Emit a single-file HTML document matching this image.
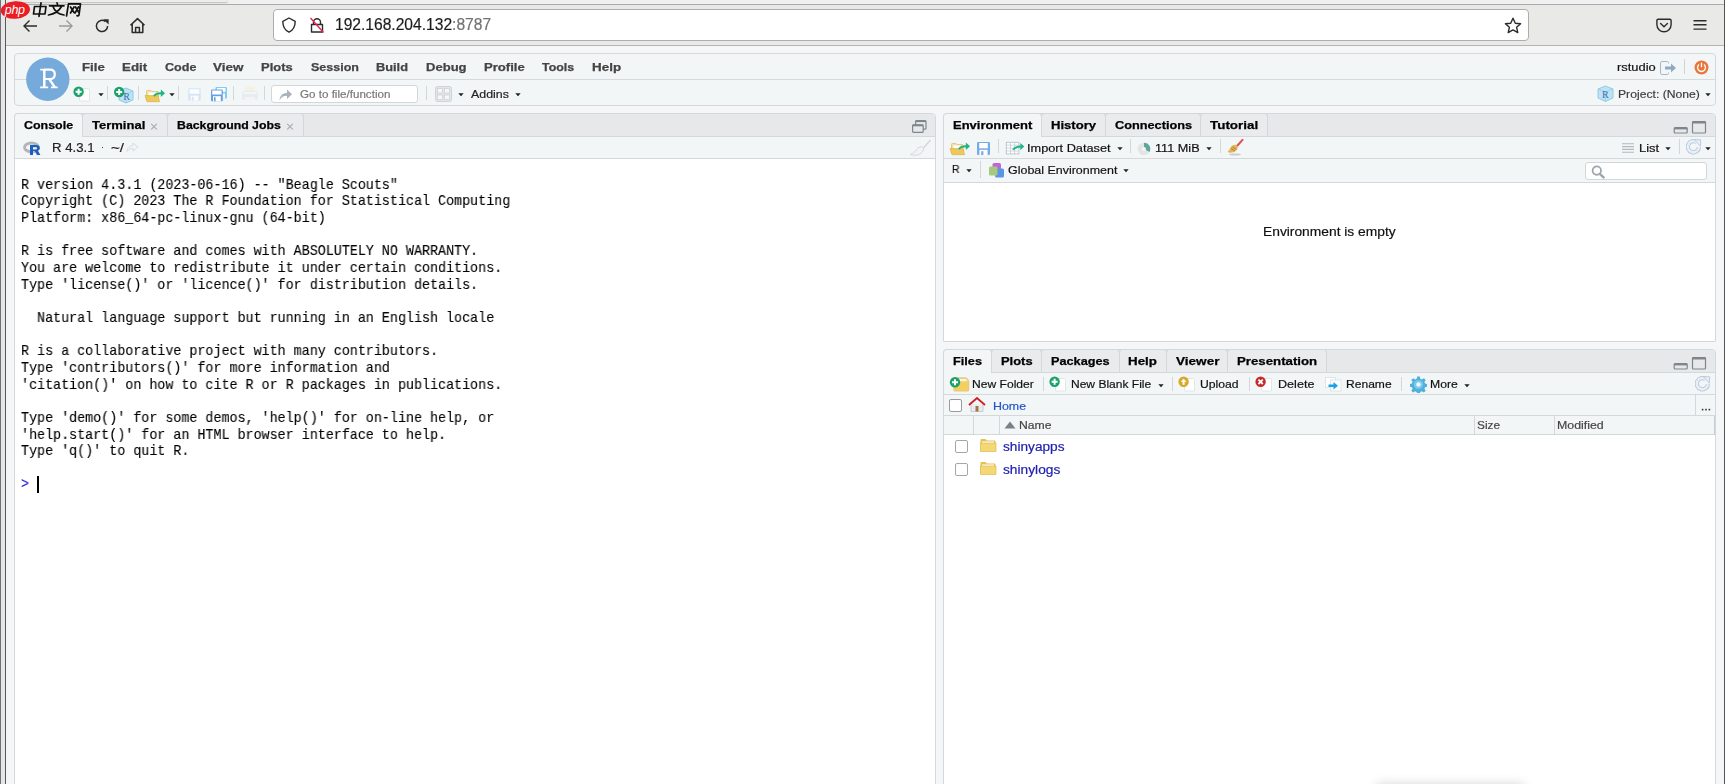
<!DOCTYPE html>
<html><head><meta charset="utf-8"><title>RStudio</title><style>*{box-sizing:border-box;margin:0;padding:0}
html,body{width:1725px;height:784px;overflow:hidden;background:#f5f6f8;font-family:"Liberation Sans",sans-serif}
.a{position:absolute;display:block}
.t{position:absolute;white-space:pre;line-height:1;transform-origin:0 0;will-change:transform}
</style></head><body>
<div class="a" style="left:0px;top:0px;width:1725px;height:784px;background:#f5f6f8;"></div>
<div class="a" style="left:0px;top:0px;width:1725px;height:5px;background:#f0f0f0;"></div>
<div class="a" style="left:6px;top:0px;width:222px;height:2px;background:#ececeb;box-shadow:0 1px 1.5px rgba(0,0,0,0.22);border-bottom-right-radius:3px;"></div>
<div class="a" style="left:0px;top:4px;width:1725px;height:1px;background:#ababab;"></div>
<div class="a" style="left:0px;top:5px;width:1725px;height:40px;background:#e9e9e7;"></div>
<div class="a" style="left:0px;top:45px;width:1725px;height:1px;background:#b4b4b2;"></div>
<div class="a" style="left:273px;top:9px;width:1256px;height:32px;background:#ffffff;border:1px solid #adadad;border-radius:4px;"></div>
<svg class="a" style="left:22px;top:19px;" width="16" height="14" viewBox="0 0 16 14"><path d="M15 7H2M7.5 1.5L2 7l5.5 5.5" fill="none" stroke="#2b2b2b" stroke-width="1.4"/></svg>
<svg class="a" style="left:58px;top:19px;" width="16" height="14" viewBox="0 0 16 14"><path d="M1 7h13M8.5 1.5L14 7l-5.5 5.5" fill="none" stroke="#9a9a9a" stroke-width="1.4"/></svg>
<svg class="a" style="left:94px;top:18px;" width="16" height="16" viewBox="0 0 16 16"><path d="M13.6 8A5.6 5.6 0 1 1 11.5 3.6" fill="none" stroke="#2b2b2b" stroke-width="1.5"/><path d="M9.3 1.2h5.3v5.3z" fill="#2b2b2b"/></svg>
<svg class="a" style="left:129px;top:17px;" width="17" height="17" viewBox="0 0 17 17"><path d="M1.5 8.3L8.5 1.6l7 6.7M3.2 7v8.6h10.6V7M6.6 15.6v-5h3.8v5" fill="none" stroke="#2b2b2b" stroke-width="1.5" stroke-linejoin="round"/></svg>
<svg class="a" style="left:281px;top:17px;" width="16" height="16" viewBox="0 0 16 16"><path d="M8 1L14.2 4.3c0 5-1.6 8.8-6.2 10.9C3.4 13.1 1.8 9.3 1.8 4.3z" fill="none" stroke="#2b2b2b" stroke-width="1.4" stroke-linejoin="round"/></svg>
<svg class="a" style="left:309px;top:17px;" width="16" height="16" viewBox="0 0 16 16"><path d="M4.5 7.5V5.2A3.5 3.5 0 0 1 11.5 5.2V7.5M2.5 7.5h11v7.5h-11z" fill="none" stroke="#2b2b2b" stroke-width="1.4" stroke-linejoin="round"/><path d="M1.5 1L14.5 15.5" stroke="#e22850" stroke-width="1.4"/></svg>
<div class="t" id="t0" style="left:335.40px;top:17px;font-size:15.6px;color:#1c1c1c;font-family:'Liberation Sans',sans-serif;-webkit-text-stroke:0.18px currentColor;transform:scaleX(0.9999);">192.168.204.132<span style="color:#727272">:8787</span></div>
<svg class="a" style="left:1504px;top:17px;" width="18" height="17" viewBox="0 0 18 17"><path d="M9 1.2l2.3 5 5.3.5-4 3.6 1.2 5.3L9 12.9l-4.8 2.7 1.2-5.3-4-3.6 5.3-.5z" fill="none" stroke="#2b2b2b" stroke-width="1.4" stroke-linejoin="round"/></svg>
<svg class="a" style="left:1656px;top:18px;" width="16" height="15" viewBox="0 0 16 15"><path d="M2.2 1.2h11.6c.8 0 1.3.5 1.3 1.3v4.3A7.1 7.1 0 0 1 8 13.8 7.1 7.1 0 0 1 .9 6.8V2.5c0-.8.5-1.3 1.3-1.3z" fill="none" stroke="#2b2b2b" stroke-width="1.4"/><path d="M4.6 5.6L8 8.8l3.4-3.2" fill="none" stroke="#2b2b2b" stroke-width="1.4" stroke-linecap="round"/></svg>
<svg class="a" style="left:1693px;top:19px;" width="14" height="12" viewBox="0 0 14 12"><path d="M0.5 1.7h13M0.5 5.8h13M0.5 10.1h13" stroke="#2b2b2b" stroke-width="1.4"/></svg>
<div class="a" style="left:0px;top:0px;width:1px;height:784px;background:#6d727a;"></div>
<div class="a" style="left:1px;top:0px;width:4px;height:784px;background:#e6e6e6;"></div>
<div class="a" style="left:5px;top:0px;width:1px;height:784px;background:#585858;"></div>
<div class="a" style="left:1724px;top:0px;width:1px;height:784px;background:#555555;"></div>
<div class="a" style="left:14px;top:53px;width:1702px;height:53px;background:#f3f6f7;border:1px solid #d3d8db;border-radius:4px;"></div>
<div class="a" style="left:15px;top:79px;width:1700px;height:1px;background:#d6dadd;"></div>
<svg class="a" style="left:26px;top:57px;" width="44" height="44" viewBox="0 0 44 44"><circle cx="21.8" cy="22.2" r="21.7" fill="#75aadb"/><g fill="none" stroke="#fff" stroke-linecap="butt"><path d="M18.3 12.2V30.8" stroke-width="2.5"/><path d="M14.2 12.6H19M14.2 30.4H22.2M25 30.4H31.7" stroke-width="1.8"/><path d="M18.3 12.6H24c3.2 0 4.8 2.1 4.8 4.7 0 2.6-1.6 4.7-4.8 4.7H18.3" stroke-width="2.2"/><path d="M23.2 22L29 30.4" stroke-width="2.3"/></g></svg>
<div class="t" id="t1" style="left:81.90px;top:62px;font-size:11.3px;color:#444444;font-family:'Liberation Sans',sans-serif;font-weight:bold;-webkit-text-stroke:0.25px currentColor;transform:scaleX(1.1711);">File</div>
<div class="t" id="t2" style="left:122.10px;top:62px;font-size:11.3px;color:#444444;font-family:'Liberation Sans',sans-serif;font-weight:bold;-webkit-text-stroke:0.25px currentColor;transform:scaleX(1.1807);">Edit</div>
<div class="t" id="t3" style="left:164.70px;top:62px;font-size:11.3px;color:#444444;font-family:'Liberation Sans',sans-serif;font-weight:bold;-webkit-text-stroke:0.25px currentColor;transform:scaleX(1.1115);">Code</div>
<div class="t" id="t4" style="left:213.40px;top:62px;font-size:11.3px;color:#444444;font-family:'Liberation Sans',sans-serif;font-weight:bold;-webkit-text-stroke:0.25px currentColor;transform:scaleX(1.1900);">View</div>
<div class="t" id="t5" style="left:261.10px;top:62px;font-size:11.3px;color:#444444;font-family:'Liberation Sans',sans-serif;font-weight:bold;-webkit-text-stroke:0.25px currentColor;transform:scaleX(1.1475);">Plots</div>
<div class="t" id="t6" style="left:310.50px;top:62px;font-size:11.3px;color:#444444;font-family:'Liberation Sans',sans-serif;font-weight:bold;-webkit-text-stroke:0.25px currentColor;transform:scaleX(1.1055);">Session</div>
<div class="t" id="t7" style="left:376.30px;top:62px;font-size:11.3px;color:#444444;font-family:'Liberation Sans',sans-serif;font-weight:bold;-webkit-text-stroke:0.25px currentColor;transform:scaleX(1.1327);">Build</div>
<div class="t" id="t8" style="left:425.70px;top:62px;font-size:11.3px;color:#444444;font-family:'Liberation Sans',sans-serif;font-weight:bold;-webkit-text-stroke:0.25px currentColor;transform:scaleX(1.1548);">Debug</div>
<div class="t" id="t9" style="left:484.00px;top:62px;font-size:11.3px;color:#444444;font-family:'Liberation Sans',sans-serif;font-weight:bold;-webkit-text-stroke:0.25px currentColor;transform:scaleX(1.1605);">Profile</div>
<div class="t" id="t10" style="left:542.00px;top:62px;font-size:11.3px;color:#444444;font-family:'Liberation Sans',sans-serif;font-weight:bold;-webkit-text-stroke:0.25px currentColor;transform:scaleX(1.0991);">Tools</div>
<div class="t" id="t11" style="left:591.50px;top:62px;font-size:11.3px;color:#444444;font-family:'Liberation Sans',sans-serif;font-weight:bold;-webkit-text-stroke:0.25px currentColor;transform:scaleX(1.1885);">Help</div>
<div class="t" id="t12" style="left:1616.50px;top:62px;font-size:11.3px;color:#111;font-family:'Liberation Sans',sans-serif;-webkit-text-stroke:0.18px currentColor;transform:scaleX(1.1438);">rstudio</div>
<svg class="a" style="left:73px;top:86px;" width="20" height="16" viewBox="0 0 20 16"><rect x="6.5" y="2.5" width="10" height="12.5" rx="1" fill="#fff" stroke="#e2e5e8"/><circle cx="5.6" cy="5.8" r="5.2" fill="#19a26a"/><path d="M2.5999999999999996 5.8h6M5.6 2.8v6" stroke="#fff" stroke-width="2"/></svg>
<svg class="a" style="left:98px;top:93px;" width="6" height="4" viewBox="0 0 6 4"><path d="M0.3 0.3h5.4L3 3.3z" fill="#222"/></svg>
<div class="a" style="left:107px;top:86px;width:1px;height:14px;background:#d3d7da;"></div>
<svg class="a" style="left:113px;top:86px;" width="22" height="18" viewBox="0 0 22 18"><path d="M6 5l7-3 7 3v9l-7 3-7-3z" fill="#bfe3f3" stroke="#7cc3e0" stroke-width="0.8"/><path d="M6 5l7 3 7-3M13 8v9" fill="none" stroke="#8fcfe6" stroke-width="0.7"/><text x="10.3" y="13.5" font-family="Liberation Serif" font-size="10" fill="#3a6fb6">R</text><circle cx="6.2" cy="6" r="5.2" fill="#19a26a"/><path d="M3.2 6h6M6.2 3v6" stroke="#fff" stroke-width="2"/></svg>
<div class="a" style="left:138px;top:86px;width:1px;height:14px;background:#d3d7da;"></div>
<svg class="a" style="left:144px;top:87px;" width="22" height="16" viewBox="0 0 22 16"><path d="M2.5 13V4.3c0-.5.3-.8.8-.8H7l1 1h5.5c.5 0 .8.3.8.8V13z" fill="#f6e29a" stroke="#d8b24c" stroke-width="0.6"/><path d="M4.3 5.3h8.2v6H4.3z" fill="#fff" stroke="#e3e3e3" stroke-width="0.4"/><path d="M1 8.6H14l1.6 6.1H3z" fill="#eec95a" stroke="#d6aa3c" stroke-width="0.6"/><path d="M10 9.2C11 7.3 13 6.3 17.2 6.3" fill="none" stroke="#1fb385" stroke-width="2"/><path d="M16.8 2.6L21 6.3l-4.2 3.6z" fill="#1fb385"/></svg>
<svg class="a" style="left:169px;top:93px;" width="6" height="4" viewBox="0 0 6 4"><path d="M0.3 0.3h5.4L3 3.3z" fill="#222"/></svg>
<div class="a" style="left:178px;top:86px;width:1px;height:14px;background:#d3d7da;"></div>
<svg class="a" style="left:188px;top:88px;" width="13" height="13" viewBox="0 0 13 13"><rect x="0.3" y="0.3" width="12.4" height="12.4" rx="1.2" fill="#d4e4f5"/><rect x="1.6" y="1.2" width="9.8" height="4.6" fill="#fafcfe"/><rect x="2.6" y="7.6" width="7.8" height="5.1" fill="#fafcfe"/><rect x="3.8" y="8.8" width="1.8" height="3.9" fill="#d4e4f5"/></svg>
<svg class="a" style="left:210px;top:86px;" width="18" height="16" viewBox="0 0 18 16"><rect x="5.5" y="1" width="11.5" height="11.5" rx="1" fill="#7fcdf0"/><rect x="7" y="2" width="8.5" height="3.8" fill="#fff"/><rect x="7.5" y="7.5" width="7.5" height="5" fill="#f4fbff"/><rect x="1" y="3.5" width="11.8" height="11.8" rx="1" fill="#6a9fe0"/><rect x="2.2" y="4.5" width="9.4" height="4" fill="#fff"/><rect x="3" y="10.2" width="7.8" height="5.1" fill="#fff"/><rect x="4" y="11.2" width="1.6" height="4.1" fill="#6a9fe0"/></svg>
<div class="a" style="left:233px;top:86px;width:1px;height:14px;background:#d3d7da;"></div>
<svg class="a" style="left:241px;top:86px;" width="18" height="16" viewBox="0 0 18 16"><rect x="4.5" y="0.5" width="9" height="6" fill="#f4f1df"/><rect x="1" y="4.5" width="16" height="9.5" rx="2.5" fill="#e9ecef"/><rect x="2.5" y="6" width="13" height="2" fill="#f3f5f7"/><rect x="4" y="11" width="10" height="3" fill="#f1f3f5"/></svg>
<div class="a" style="left:264px;top:86px;width:1px;height:14px;background:#d3d7da;"></div>
<div class="a" style="left:271px;top:85px;width:147px;height:18px;background:#ffffff;border:1px solid #d3d7da;border-radius:3px;"></div>
<svg class="a" style="left:278px;top:88px;" width="15" height="13" viewBox="0 0 15 13"><path d="M1.5 12.5C2 7 5 5 9 5V1.5l5 4.7-5 4.7V7.8C5.5 7.8 3.3 9 1.5 12.5z" fill="#a9b2bd"/></svg>
<div class="t" id="t13" style="left:299.60px;top:89px;font-size:11.3px;color:#777;font-family:'Liberation Sans',sans-serif;-webkit-text-stroke:0.18px currentColor;transform:scaleX(1.0282);">Go to file/function</div>
<div class="a" style="left:426px;top:86px;width:1px;height:14px;background:#d3d7da;"></div>
<svg class="a" style="left:435px;top:86px;" width="17" height="16" viewBox="0 0 17 16"><rect x="0.5" y="0.5" width="16" height="15" rx="2" fill="#e3e6e9" stroke="#cfd3d7"/><rect x="2.5" y="2.5" width="5" height="4.5" fill="#f6f7f8" stroke="#c5c9cd" stroke-width="0.6"/><rect x="9.5" y="2.5" width="5" height="4.5" fill="#f6f7f8" stroke="#c5c9cd" stroke-width="0.6"/><rect x="2.5" y="9" width="5" height="4.5" fill="#f6f7f8" stroke="#c5c9cd" stroke-width="0.6"/><rect x="9.5" y="9" width="5" height="4.5" fill="#f6f7f8" stroke="#c5c9cd" stroke-width="0.6"/></svg>
<svg class="a" style="left:458px;top:93px;" width="6" height="4" viewBox="0 0 6 4"><path d="M0.3 0.3h5.4L3 3.3z" fill="#222"/></svg>
<div class="t" id="t14" style="left:471.40px;top:89px;font-size:11.3px;color:#222;font-family:'Liberation Sans',sans-serif;-webkit-text-stroke:0.18px currentColor;transform:scaleX(1.0971);">Addins</div>
<svg class="a" style="left:515px;top:93px;" width="6" height="4" viewBox="0 0 6 4"><path d="M0.3 0.3h5.4L3 3.3z" fill="#222"/></svg>
<svg class="a" style="left:1660px;top:61px;" width="17" height="14" viewBox="0 0 17 14"><path d="M8.5 2.5V1.8c0-.8-.5-1.3-1.3-1.3H1.8C1 .5.5 1 .5 1.8v10.4c0 .8.5 1.3 1.3 1.3h5.4c.8 0 1.3-.5 1.3-1.3V11.5" fill="none" stroke="#a3b8cc" stroke-width="1"/><path d="M5 5.5h6V2.5l5 4.5-5 4.5V8.5H5z" fill="#8fa9c2"/></svg>
<div class="a" style="left:1684px;top:59px;width:1px;height:15px;background:#d0d4d8;"></div>
<svg class="a" style="left:1694px;top:60px;" width="15" height="15" viewBox="0 0 15 15"><circle cx="7.5" cy="7.5" r="7" fill="#e8773d"/><path d="M5 4.6A3.9 3.9 0 1 0 10 4.6" fill="none" stroke="#fff" stroke-width="1.3"/><path d="M7.5 2.6v4.6" stroke="#fff" stroke-width="1.3"/></svg>
<svg class="a" style="left:1597px;top:85px;" width="17" height="17" viewBox="0 0 17 17"><path d="M1 4l7.5-3 7.5 3v9l-7.5 3.5-7.5-3.5z" fill="#bfe3f3" stroke="#7cc3e0" stroke-width="0.8"/><path d="M1 4l7.5 3 7.5-3M8.5 7v9.5" fill="none" stroke="#8fcfe6" stroke-width="0.7"/><text x="5" y="12.5" font-family="Liberation Serif" font-size="10" fill="#3a6fb6">R</text></svg>
<div class="t" id="t15" style="left:1618.00px;top:89px;font-size:11.3px;color:#3d3d3d;font-family:'Liberation Sans',sans-serif;-webkit-text-stroke:0.18px currentColor;transform:scaleX(1.0781);">Project: (None)</div>
<svg class="a" style="left:1705px;top:93px;" width="6" height="4" viewBox="0 0 6 4"><path d="M0.3 0.3h5.4L3 3.3z" fill="#222"/></svg>
<div class="a" style="left:14px;top:113px;width:922px;height:680px;background:#ffffff;border:1px solid #d3d8db;border-radius:4px;"></div>
<div class="a" style="left:15px;top:114px;width:920px;height:23px;background:#e6e8ea;border-top-left-radius:3px;border-top-right-radius:3px;"></div>
<div class="a" style="left:15px;top:136px;width:920px;height:1px;background:#d3d8db;"></div>
<div class="a" style="left:14px;top:113px;width:69px;height:24px;background:#f3f6f7;border:1px solid #d3d8db;border-bottom:none;border-top-left-radius:4px;border-top-right-radius:4px;"></div>
<div class="a" style="left:82px;top:113px;width:86px;height:23px;background:#e9ebed;border:1px solid #d3d8db;border-bottom:none;border-top-left-radius:4px;border-top-right-radius:4px;"></div>
<div class="a" style="left:167px;top:113px;width:137px;height:23px;background:#e9ebed;border:1px solid #d3d8db;border-bottom:none;border-top-left-radius:4px;border-top-right-radius:4px;"></div>
<div class="t" id="t16" style="left:23.80px;top:120px;font-size:11px;color:#000;font-family:'Liberation Sans',sans-serif;font-weight:bold;-webkit-text-stroke:0.25px currentColor;transform:scaleX(1.1312);">Console</div>
<div class="t" id="t17" style="left:91.70px;top:120px;font-size:11px;color:#000;font-family:'Liberation Sans',sans-serif;font-weight:bold;-webkit-text-stroke:0.25px currentColor;transform:scaleX(1.1836);">Terminal</div>
<svg class="a" style="left:150px;top:123px;" width="8" height="7" viewBox="0 0 8 7"><path d="M1.2 0.8l5.6 5.6M6.8 0.8L1.2 6.4" stroke="#a9aeb3" stroke-width="1.2"/></svg>
<div class="t" id="t18" style="left:176.90px;top:120px;font-size:11px;color:#000;font-family:'Liberation Sans',sans-serif;font-weight:bold;-webkit-text-stroke:0.25px currentColor;transform:scaleX(1.1173);">Background Jobs</div>
<svg class="a" style="left:286px;top:123px;" width="8" height="7" viewBox="0 0 8 7"><path d="M1.2 0.8l5.6 5.6M6.8 0.8L1.2 6.4" stroke="#a9aeb3" stroke-width="1.2"/></svg>
<svg class="a" style="left:911px;top:119px;" width="16" height="15" viewBox="0 0 16 15"><rect x="4.6" y="1.6" width="10.4" height="8.6" rx="1" fill="none" stroke="#7d868c" stroke-width="1.2"/><rect x="4.6" y="1.3" width="10.4" height="1.8" fill="#7d868c"/><rect x="1.6" y="5.8" width="10.6" height="7.6" rx="1" fill="#e6e8ea" stroke="#7d868c" stroke-width="1.2"/><rect x="1.6" y="5.5" width="10.6" height="1.8" fill="#7d868c"/></svg>
<div class="a" style="left:15px;top:137px;width:920px;height:21px;background:#f3f6f7;"></div>
<div class="a" style="left:15px;top:158px;width:920px;height:1px;background:#d3d8db;"></div>
<svg class="a" style="left:22px;top:141px;" width="19" height="15" viewBox="0 0 19 15"><ellipse cx="9.5" cy="6.4" rx="7" ry="4.4" fill="none" stroke="#b2b4b8" stroke-width="2.8"/><path fill-rule="evenodd" d="M8 4h6.2c2.3 0 3.6 1.2 3.6 2.9 0 1.4-.8 2.3-2 2.7l2.6 4.4h-3.4l-2.2-4H11v4H8z M11 6.2v2.4h2.8c.9 0 1.4-.5 1.4-1.2s-.5-1.2-1.4-1.2z" fill="#1c5fc0"/></svg>
<div class="t" id="t19" style="left:51.70px;top:142px;font-size:12px;color:#222;font-family:'Liberation Sans',sans-serif;-webkit-text-stroke:0.18px currentColor;transform:scaleX(1.1007);">R 4.3.1</div>
<div class="a" style="left:101.8px;top:146.8px;width:1.5px;height:1.5px;background:#444;"></div>
<div class="t" id="t20" style="left:110.80px;top:142px;font-size:12px;color:#222;font-family:'Liberation Sans',sans-serif;-webkit-text-stroke:0.18px currentColor;transform:scaleX(1.2568);">~/</div>
<svg class="a" style="left:126px;top:142px;" width="13" height="10" viewBox="0 0 13 10"><path d="M1 9.5C1.5 5 4 3.6 7 3.6V1l5 4-5 4V6.5C4.5 6.5 2.7 7.3 1 9.5z" fill="none" stroke="#d5dade" stroke-width="1"/></svg>
<svg class="a" style="left:910px;top:139px;" width="22" height="18" viewBox="0 0 22 18"><path d="M20.5 1L13 9.5" stroke="#d0d4d8" stroke-width="1.2"/><path d="M13.5 8.5c-2-1.5-5-1-7 2-1.5 2.2-3.5 4-6 5 3.5 1.5 9 1 11.5-2.2 1.3-1.6 2-3.2 1.5-4.8z" fill="#f0f2f4" stroke="#d0d4d8" stroke-width="0.9"/></svg>
<div class="t" id="t21" style="left:20.70px;top:178px;font-size:14.4px;color:#000;font-family:'Liberation Mono',monospace;-webkit-text-stroke:0.12px currentColor;transform:scaleX(0.9287);">R version 4.3.1 (2023-06-16) -- &quot;Beagle Scouts&quot;</div>
<div class="t" id="t22" style="left:20.70px;top:194px;font-size:14.4px;color:#000;font-family:'Liberation Mono',monospace;-webkit-text-stroke:0.12px currentColor;transform:scaleX(0.9287);">Copyright (C) 2023 The R Foundation for Statistical Computing</div>
<div class="t" id="t23" style="left:20.70px;top:211px;font-size:14.4px;color:#000;font-family:'Liberation Mono',monospace;-webkit-text-stroke:0.12px currentColor;transform:scaleX(0.9287);">Platform: x86_64-pc-linux-gnu (64-bit)</div>
<div class="t" id="t24" style="left:20.70px;top:244px;font-size:14.4px;color:#000;font-family:'Liberation Mono',monospace;-webkit-text-stroke:0.12px currentColor;transform:scaleX(0.9287);">R is free software and comes with ABSOLUTELY NO WARRANTY.</div>
<div class="t" id="t25" style="left:20.70px;top:261px;font-size:14.4px;color:#000;font-family:'Liberation Mono',monospace;-webkit-text-stroke:0.12px currentColor;transform:scaleX(0.9287);">You are welcome to redistribute it under certain conditions.</div>
<div class="t" id="t26" style="left:20.70px;top:278px;font-size:14.4px;color:#000;font-family:'Liberation Mono',monospace;-webkit-text-stroke:0.12px currentColor;transform:scaleX(0.9287);">Type 'license()' or 'licence()' for distribution details.</div>
<div class="t" id="t27" style="left:20.70px;top:311px;font-size:14.4px;color:#000;font-family:'Liberation Mono',monospace;-webkit-text-stroke:0.12px currentColor;transform:scaleX(0.9287);">  Natural language support but running in an English locale</div>
<div class="t" id="t28" style="left:20.70px;top:344px;font-size:14.4px;color:#000;font-family:'Liberation Mono',monospace;-webkit-text-stroke:0.12px currentColor;transform:scaleX(0.9287);">R is a collaborative project with many contributors.</div>
<div class="t" id="t29" style="left:20.70px;top:361px;font-size:14.4px;color:#000;font-family:'Liberation Mono',monospace;-webkit-text-stroke:0.12px currentColor;transform:scaleX(0.9287);">Type 'contributors()' for more information and</div>
<div class="t" id="t30" style="left:20.70px;top:378px;font-size:14.4px;color:#000;font-family:'Liberation Mono',monospace;-webkit-text-stroke:0.12px currentColor;transform:scaleX(0.9287);">'citation()' on how to cite R or R packages in publications.</div>
<div class="t" id="t31" style="left:20.70px;top:411px;font-size:14.4px;color:#000;font-family:'Liberation Mono',monospace;-webkit-text-stroke:0.12px currentColor;transform:scaleX(0.9287);">Type 'demo()' for some demos, 'help()' for on-line help, or</div>
<div class="t" id="t32" style="left:20.70px;top:428px;font-size:14.4px;color:#000;font-family:'Liberation Mono',monospace;-webkit-text-stroke:0.12px currentColor;transform:scaleX(0.9287);">'help.start()' for an HTML browser interface to help.</div>
<div class="t" id="t33" style="left:20.70px;top:444px;font-size:14.4px;color:#000;font-family:'Liberation Mono',monospace;-webkit-text-stroke:0.12px currentColor;transform:scaleX(0.9287);">Type 'q()' to quit R.</div>
<div class="t" id="t34" style="left:20.70px;top:477px;font-size:14.4px;color:#1a1ad8;font-family:'Liberation Mono',monospace;-webkit-text-stroke:0.12px currentColor;transform:scaleX(0.9282);">&gt;</div>
<div class="a" style="left:37px;top:476px;width:2px;height:17px;background:#000;"></div>
<div class="a" style="left:943px;top:113px;width:773px;height:229px;background:#ffffff;border:1px solid #d3d8db;border-radius:4px 4px 0 0;"></div>
<div class="a" style="left:944px;top:114px;width:771px;height:23px;background:#e6e8ea;border-top-left-radius:3px;border-top-right-radius:3px;"></div>
<div class="a" style="left:944px;top:136px;width:771px;height:1px;background:#d3d8db;"></div>
<div class="a" style="left:943px;top:113px;width:99px;height:24px;background:#f3f6f7;border:1px solid #d3d8db;border-bottom:none;border-top-left-radius:4px;border-top-right-radius:4px;"></div>
<div class="a" style="left:1041px;top:113px;width:65px;height:23px;background:#e9ebed;border:1px solid #d3d8db;border-bottom:none;border-top-left-radius:4px;border-top-right-radius:4px;"></div>
<div class="a" style="left:1105px;top:113px;width:96px;height:23px;background:#e9ebed;border:1px solid #d3d8db;border-bottom:none;border-top-left-radius:4px;border-top-right-radius:4px;"></div>
<div class="a" style="left:1200px;top:113px;width:68px;height:23px;background:#e9ebed;border:1px solid #d3d8db;border-bottom:none;border-top-left-radius:4px;border-top-right-radius:4px;"></div>
<div class="t" id="t35" style="left:953.10px;top:120px;font-size:11px;color:#000;font-family:'Liberation Sans',sans-serif;font-weight:bold;-webkit-text-stroke:0.25px currentColor;transform:scaleX(1.1795);">Environment</div>
<div class="t" id="t36" style="left:1050.90px;top:120px;font-size:11px;color:#000;font-family:'Liberation Sans',sans-serif;font-weight:bold;-webkit-text-stroke:0.25px currentColor;transform:scaleX(1.1898);">History</div>
<div class="t" id="t37" style="left:1114.50px;top:120px;font-size:11px;color:#000;font-family:'Liberation Sans',sans-serif;font-weight:bold;-webkit-text-stroke:0.25px currentColor;transform:scaleX(1.1572);">Connections</div>
<div class="t" id="t38" style="left:1209.50px;top:120px;font-size:11px;color:#000;font-family:'Liberation Sans',sans-serif;font-weight:bold;-webkit-text-stroke:0.25px currentColor;transform:scaleX(1.2198);">Tutorial</div>
<svg class="a" style="left:1673px;top:121px;" width="34" height="13" viewBox="0 0 34 13"><rect x="1.2" y="6.6" width="13" height="5.4" rx="1" fill="none" stroke="#7d868c" stroke-width="1.2"/><rect x="1.2" y="6.6" width="13" height="1.8" fill="#7d868c"/><rect x="19.5" y="0.6" width="13" height="11.4" rx="0.8" fill="none" stroke="#7d868c" stroke-width="1.2"/><rect x="19.5" y="0.6" width="13" height="1.9" fill="#7d868c"/></svg>
<div class="a" style="left:944px;top:137px;width:771px;height:21px;background:#f3f6f7;"></div>
<div class="a" style="left:944px;top:158px;width:771px;height:1px;background:#d3d8db;"></div>
<div class="a" style="left:944px;top:159px;width:771px;height:23px;background:#f3f6f7;"></div>
<div class="a" style="left:944px;top:182px;width:771px;height:1px;background:#d3d8db;"></div>
<svg class="a" style="left:949px;top:140px;" width="21" height="16" viewBox="0 0 21 16"><path d="M2.5 13V4.3c0-.5.3-.8.8-.8H7l1 1h5.5c.5 0 .8.3.8.8V13z" fill="#f6e29a" stroke="#d8b24c" stroke-width="0.6"/><path d="M4.3 5.3h8.2v6H4.3z" fill="#fff" stroke="#e3e3e3" stroke-width="0.4"/><path d="M1 8.6H14l1.6 6.1H3z" fill="#eec95a" stroke="#d6aa3c" stroke-width="0.6"/><path d="M10 9.2C11 7.3 13 6.3 17.2 6.3" fill="none" stroke="#1fb385" stroke-width="2"/><path d="M16.8 2.6L21 6.3l-4.2 3.6z" fill="#1fb385"/></svg>
<svg class="a" style="left:977px;top:142px;" width="13" height="13" viewBox="0 0 13 13"><rect x="0" y="0" width="13" height="13" rx="1.3" fill="#74ace6"/><rect x="2.2" y="1" width="8.6" height="5.3" fill="#fff"/><rect x="2.4" y="7.8" width="8.2" height="5.2" fill="#fff"/><rect x="4.2" y="9.2" width="2.2" height="3.8" fill="#74ace6"/></svg>
<div class="a" style="left:998px;top:139px;width:1px;height:14px;background:#d3d7da;"></div>
<svg class="a" style="left:1005px;top:141px;" width="21" height="14" viewBox="0 0 21 14"><rect x="1.3" y="1.3" width="12.6" height="11.6" fill="#fff" stroke="#b6bfcc" stroke-width="0.9"/><path d="M1.3 4.2h12.6M1.3 7.1h12.6M1.3 10h12.6M5.5 1.3v11.6M9.7 1.3v11.6" stroke="#c4cbd6" stroke-width="0.8"/><path d="M8 8.8C9.5 6.6 11.5 5.6 15.8 5.6" fill="none" stroke="#1fb385" stroke-width="2"/><path d="M15.3 2L19.3 5.6l-4 3.6z" fill="#1fb385"/></svg>
<div class="t" id="t39" style="left:1026.90px;top:143px;font-size:11.3px;color:#111;font-family:'Liberation Sans',sans-serif;-webkit-text-stroke:0.18px currentColor;transform:scaleX(1.1283);">Import Dataset</div>
<svg class="a" style="left:1117px;top:147px;" width="6" height="4" viewBox="0 0 6 4"><path d="M0.3 0.3h5.4L3 3.3z" fill="#222"/></svg>
<div class="a" style="left:1130px;top:139px;width:1px;height:14px;background:#d3d7da;"></div>
<svg class="a" style="left:1137px;top:142px;" width="14" height="14" viewBox="0 0 14 14"><circle cx="7" cy="7" r="6.3" fill="#e3e4e6"/><path d="M7 7L7 0.7A6.3 6.3 0 0 1 12.5 10z" fill="#5ea59a"/><circle cx="7" cy="7" r="2" fill="#f3f6f7"/></svg>
<div class="t" id="t40" style="left:1155.10px;top:143px;font-size:11.3px;color:#111;font-family:'Liberation Sans',sans-serif;-webkit-text-stroke:0.18px currentColor;transform:scaleX(1.1216);">111 MiB</div>
<svg class="a" style="left:1206px;top:147px;" width="6" height="4" viewBox="0 0 6 4"><path d="M0.3 0.3h5.4L3 3.3z" fill="#222"/></svg>
<div class="a" style="left:1220px;top:139px;width:1px;height:14px;background:#d3d7da;"></div>
<svg class="a" style="left:1227px;top:139px;" width="17" height="17" viewBox="0 0 17 17"><path d="M15.5 0.8L10 7" stroke="#e05050" stroke-width="2" stroke-linecap="round"/><path d="M10.5 6.5C8 5 5 6 3.5 8.5 2.5 10.5 1.5 12 0.5 13c3 1.5 7 .5 9-2 1.2-1.4 1.5-3 1-4.5z" fill="#e2b55a"/><path d="M4 9.5l4 2.5M5.5 8l4 2.5" stroke="#a87c28" stroke-width="0.9"/><ellipse cx="8" cy="15.5" rx="6" ry="1" fill="#c8ccd0"/></svg>
<svg class="a" style="left:1622px;top:143px;" width="13" height="11" viewBox="0 0 13 11"><path d="M0 .8h12M0 3.6h12M0 6.4h12M0 9.2h12" stroke="#b4b9be" stroke-width="1.1"/></svg>
<div class="t" id="t41" style="left:1639.40px;top:143px;font-size:11.3px;color:#111;font-family:'Liberation Sans',sans-serif;-webkit-text-stroke:0.18px currentColor;transform:scaleX(1.1481);">List</div>
<svg class="a" style="left:1665px;top:147px;" width="6" height="4" viewBox="0 0 6 4"><path d="M0.3 0.3h5.4L3 3.3z" fill="#222"/></svg>
<div class="a" style="left:1679px;top:139px;width:1px;height:15px;background:#d3d7da;"></div>
<svg class="a" style="left:1686px;top:139px;" width="16" height="16" viewBox="0 0 16 16"><path d="M13 8.2A5.6 5.6 0 1 1 10.6 3.1" fill="none" stroke="#b4c3d6" stroke-width="4.2" stroke-linecap="butt"/><path d="M13 8.2A5.6 5.6 0 1 1 10.6 3.1" fill="none" stroke="#e6eef8" stroke-width="2.6"/><path d="M8.3 0.6L14.8 0.8 14.3 7.2z" fill="#e6eef8" stroke="#b4c3d6" stroke-width="0.8" stroke-linejoin="round"/></svg>
<svg class="a" style="left:1705px;top:147px;" width="6" height="4" viewBox="0 0 6 4"><path d="M0.3 0.3h5.4L3 3.3z" fill="#222"/></svg>
<div class="t" id="t42" style="left:951.90px;top:164px;font-size:11.3px;color:#111;font-family:'Liberation Sans',sans-serif;-webkit-text-stroke:0.18px currentColor;transform:scaleX(0.9178);">R</div>
<svg class="a" style="left:966px;top:169px;" width="6" height="4" viewBox="0 0 6 4"><path d="M0.3 0.3h5.4L3 3.3z" fill="#222"/></svg>
<div class="a" style="left:980px;top:161px;width:1px;height:17px;background:#d3d7da;"></div>
<svg class="a" style="left:989px;top:163px;" width="16" height="15" viewBox="0 0 16 15"><rect x="3.5" y="0" width="8.5" height="9" rx="1.5" fill="#c06ad0"/><rect x="6" y="5.5" width="9" height="9" rx="1.5" fill="#5b93e6"/><rect x="0" y="3.5" width="8.5" height="9" rx="1.5" fill="#a6c97d"/></svg>
<div class="t" id="t43" style="left:1008.40px;top:165px;font-size:11.3px;color:#111;font-family:'Liberation Sans',sans-serif;-webkit-text-stroke:0.18px currentColor;transform:scaleX(1.1026);">Global Environment</div>
<svg class="a" style="left:1123px;top:169px;" width="6" height="4" viewBox="0 0 6 4"><path d="M0.3 0.3h5.4L3 3.3z" fill="#222"/></svg>
<div class="a" style="left:1585px;top:162px;width:122px;height:18px;background:#ffffff;border:1px solid #d3d7da;border-radius:3px;"></div>
<svg class="a" style="left:1591px;top:165px;" width="15" height="14" viewBox="0 0 15 14"><circle cx="5.8" cy="5.6" r="4.2" fill="none" stroke="#9ea6ad" stroke-width="1.8"/><path d="M8.8 8.8l4.5 4.3" stroke="#9ea6ad" stroke-width="2.4"/></svg>
<div class="t" id="t44" style="left:1263.10px;top:226px;font-size:12.4px;color:#111;font-family:'Liberation Sans',sans-serif;-webkit-text-stroke:0.18px currentColor;transform:scaleX(1.1138);">Environment is empty</div>
<div class="a" style="left:943px;top:349px;width:773px;height:445px;background:#ffffff;border:1px solid #d3d8db;border-radius:4px;"></div>
<div class="a" style="left:944px;top:350px;width:771px;height:23px;background:#e6e8ea;border-top-left-radius:3px;border-top-right-radius:3px;"></div>
<div class="a" style="left:944px;top:372px;width:771px;height:1px;background:#d3d8db;"></div>
<div class="a" style="left:943px;top:349px;width:49px;height:24px;background:#f3f6f7;border:1px solid #d3d8db;border-bottom:none;border-top-left-radius:4px;border-top-right-radius:4px;"></div>
<div class="a" style="left:991px;top:349px;width:51px;height:23px;background:#e9ebed;border:1px solid #d3d8db;border-bottom:none;border-top-left-radius:4px;border-top-right-radius:4px;"></div>
<div class="a" style="left:1041px;top:349px;width:79px;height:23px;background:#e9ebed;border:1px solid #d3d8db;border-bottom:none;border-top-left-radius:4px;border-top-right-radius:4px;"></div>
<div class="a" style="left:1119px;top:349px;width:48px;height:23px;background:#e9ebed;border:1px solid #d3d8db;border-bottom:none;border-top-left-radius:4px;border-top-right-radius:4px;"></div>
<div class="a" style="left:1166px;top:349px;width:62px;height:23px;background:#e9ebed;border:1px solid #d3d8db;border-bottom:none;border-top-left-radius:4px;border-top-right-radius:4px;"></div>
<div class="a" style="left:1227px;top:349px;width:100px;height:23px;background:#e9ebed;border:1px solid #d3d8db;border-bottom:none;border-top-left-radius:4px;border-top-right-radius:4px;"></div>
<div class="t" id="t45" style="left:953.10px;top:356px;font-size:11px;color:#000;font-family:'Liberation Sans',sans-serif;font-weight:bold;-webkit-text-stroke:0.25px currentColor;transform:scaleX(1.1564);">Files</div>
<div class="t" id="t46" style="left:1000.80px;top:356px;font-size:11px;color:#000;font-family:'Liberation Sans',sans-serif;font-weight:bold;-webkit-text-stroke:0.25px currentColor;transform:scaleX(1.1744);">Plots</div>
<div class="t" id="t47" style="left:1051.30px;top:356px;font-size:11px;color:#000;font-family:'Liberation Sans',sans-serif;font-weight:bold;-webkit-text-stroke:0.25px currentColor;transform:scaleX(1.1543);">Packages</div>
<div class="t" id="t48" style="left:1128.30px;top:356px;font-size:11px;color:#000;font-family:'Liberation Sans',sans-serif;font-weight:bold;-webkit-text-stroke:0.25px currentColor;transform:scaleX(1.2121);">Help</div>
<div class="t" id="t49" style="left:1175.50px;top:356px;font-size:11px;color:#000;font-family:'Liberation Sans',sans-serif;font-weight:bold;-webkit-text-stroke:0.25px currentColor;transform:scaleX(1.2329);">Viewer</div>
<div class="t" id="t50" style="left:1237.30px;top:356px;font-size:11px;color:#000;font-family:'Liberation Sans',sans-serif;font-weight:bold;-webkit-text-stroke:0.25px currentColor;transform:scaleX(1.2035);">Presentation</div>
<svg class="a" style="left:1673px;top:357px;" width="34" height="13" viewBox="0 0 34 13"><rect x="1.2" y="6.6" width="13" height="5.4" rx="1" fill="none" stroke="#7d868c" stroke-width="1.2"/><rect x="1.2" y="6.6" width="13" height="1.8" fill="#7d868c"/><rect x="19.5" y="0.6" width="13" height="11.4" rx="0.8" fill="none" stroke="#7d868c" stroke-width="1.2"/><rect x="19.5" y="0.6" width="13" height="1.9" fill="#7d868c"/></svg>
<div class="a" style="left:944px;top:373px;width:771px;height:21px;background:#f3f6f7;"></div>
<div class="a" style="left:944px;top:394px;width:771px;height:1px;background:#d3d8db;"></div>
<div class="a" style="left:944px;top:395px;width:771px;height:21px;background:#f3f6f7;"></div>
<div class="a" style="left:944px;top:415px;width:771px;height:1px;background:#d3d8db;"></div>
<svg class="a" style="left:949px;top:376px;" width="21" height="16" viewBox="0 0 21 16"><path d="M4.8 13.8V3.2c0-.9.5-1.4 1.4-1.4h10.3c1 0 1.3.4 2 1.2l.7.9c.4.5.6.9.6 1.6v8.3c0 .9-.4 1.3-1.3 1.3H6.1c-.9 0-1.3-.4-1.3-1.3z" fill="#f1d47c" stroke="#d9b452" stroke-width="0.6"/><path d="M6 3h11.5v2.5H6z" fill="#f4f4f0"/><path d="M4.8 5.6h14.3v8.2c0 .8-.4 1.3-1.2 1.3H6c-.8 0-1.2-.5-1.2-1.3z" fill="#f3cf5e"/><circle cx="6" cy="6.2" r="5.2" fill="#19a26a"/><path d="M3 6.2h6M6 3.2v6" stroke="#fff" stroke-width="2"/></svg>
<div class="t" id="t51" style="left:972.10px;top:379px;font-size:11.3px;color:#111;font-family:'Liberation Sans',sans-serif;-webkit-text-stroke:0.18px currentColor;transform:scaleX(1.0698);">New Folder</div>
<div class="a" style="left:1043px;top:377px;width:1px;height:14px;background:#d3d7da;"></div>
<svg class="a" style="left:1049px;top:376px;" width="19" height="16" viewBox="0 0 19 16"><rect x="6.5" y="2.5" width="10" height="12.5" rx="1" fill="#fff" stroke="#e2e5e8"/><circle cx="5.6" cy="5.8" r="5.2" fill="#19a26a"/><path d="M2.5999999999999996 5.8h6M5.6 2.8v6" stroke="#fff" stroke-width="2"/></svg>
<div class="t" id="t52" style="left:1071.40px;top:379px;font-size:11.3px;color:#111;font-family:'Liberation Sans',sans-serif;-webkit-text-stroke:0.18px currentColor;transform:scaleX(1.0645);">New Blank File</div>
<svg class="a" style="left:1158px;top:384px;" width="6" height="4" viewBox="0 0 6 4"><path d="M0.3 0.3h5.4L3 3.3z" fill="#222"/></svg>
<div class="a" style="left:1172px;top:377px;width:1px;height:14px;background:#d3d7da;"></div>
<svg class="a" style="left:1178px;top:376px;" width="18" height="16" viewBox="0 0 18 16"><rect x="6.5" y="2.5" width="10" height="12.5" rx="1" fill="#fff" stroke="#e2e5e8"/><circle cx="5.6" cy="5.8" r="5.2" fill="#d8a828"/><path d="M5.6 2.8l3 3h-2v3h-2v-3h-2z" fill="#fff"/></svg>
<div class="t" id="t53" style="left:1200.20px;top:379px;font-size:11.3px;color:#111;font-family:'Liberation Sans',sans-serif;-webkit-text-stroke:0.18px currentColor;transform:scaleX(1.0778);">Upload</div>
<div class="a" style="left:1249px;top:377px;width:1px;height:14px;background:#d3d7da;"></div>
<svg class="a" style="left:1255px;top:376px;" width="18" height="16" viewBox="0 0 18 16"><rect x="6.5" y="2.5" width="10" height="12.5" rx="1" fill="#fff" stroke="#e2e5e8"/><circle cx="5.6" cy="5.8" r="5.2" fill="#c42a2a"/><path d="M3.4 3.6l4.4 4.4M7.8 3.6L3.4 8" stroke="#fff" stroke-width="1.8"/></svg>
<div class="t" id="t54" style="left:1278.00px;top:379px;font-size:11.3px;color:#111;font-family:'Liberation Sans',sans-serif;-webkit-text-stroke:0.18px currentColor;transform:scaleX(1.1146);">Delete</div>
<svg class="a" style="left:1325px;top:377px;" width="18" height="15" viewBox="0 0 18 15"><rect x="0.5" y="0.5" width="10" height="10" fill="#fff" stroke="#dfe3e6"/><rect x="5.5" y="3" width="10.5" height="11" fill="#fff" stroke="#dfe3e6"/><path d="M3.5 7.5h5V5l4.5 3.8-4.5 3.8V10h-5z" fill="#19a4e6"/></svg>
<div class="t" id="t55" style="left:1345.90px;top:379px;font-size:11.3px;color:#111;font-family:'Liberation Sans',sans-serif;-webkit-text-stroke:0.18px currentColor;transform:scaleX(1.0678);">Rename</div>
<div class="a" style="left:1401px;top:377px;width:1px;height:14px;background:#d3d7da;"></div>
<svg class="a" style="left:1410px;top:376px;" width="17" height="17" viewBox="0 0 17 17"><g transform="translate(8.5 8.5)"><path d="M-1.3-8h2.6l.5 2.3 1.6.7 2-1.3 1.8 1.8-1.3 2 .7 1.6 2.3.5v2.6l-2.3.5-.7 1.6 1.3 2-1.8 1.8-2-1.3-1.6.7-.5 2.3h-2.6l-.5-2.3-1.6-.7-2 1.3-1.8-1.8 1.3-2-.7-1.6-2.3-.5v-2.6l2.3-.5.7-1.6-1.3-2 1.8-1.8 2 1.3 1.6-.7z" fill="#4fb0dc"/><circle r="4.6" fill="#7cc8ea"/><circle r="2.2" fill="#eef7fb"/></g></svg>
<div class="t" id="t56" style="left:1429.90px;top:379px;font-size:11.3px;color:#111;font-family:'Liberation Sans',sans-serif;-webkit-text-stroke:0.18px currentColor;transform:scaleX(1.0796);">More</div>
<svg class="a" style="left:1464px;top:384px;" width="6" height="4" viewBox="0 0 6 4"><path d="M0.3 0.3h5.4L3 3.3z" fill="#222"/></svg>
<svg class="a" style="left:1695px;top:376px;" width="16" height="16" viewBox="0 0 16 16"><path d="M13 8.2A5.6 5.6 0 1 1 10.6 3.1" fill="none" stroke="#b4c3d6" stroke-width="4.2" stroke-linecap="butt"/><path d="M13 8.2A5.6 5.6 0 1 1 10.6 3.1" fill="none" stroke="#e6eef8" stroke-width="2.6"/><path d="M8.3 0.6L14.8 0.8 14.3 7.2z" fill="#e6eef8" stroke="#b4c3d6" stroke-width="0.8" stroke-linejoin="round"/></svg>
<div class="a" style="left:949px;top:399px;width:13px;height:13px;background:#ffffff;border:1px solid #9a9a9a;border-radius:2px;"></div>
<svg class="a" style="left:968px;top:397px;" width="18" height="15" viewBox="0 0 18 15"><path d="M3 7.5v7h12v-7" fill="#e9ebee" stroke="#b0b5ba" stroke-width="0.6"/><rect x="7.5" y="9" width="3" height="5.5" fill="#a87440"/><path d="M1 8L9 1l8 7" fill="none" stroke="#d01e1e" stroke-width="1.8"/></svg>
<div class="t" id="t57" style="left:992.70px;top:401px;font-size:11.3px;color:#2354c8;font-family:'Liberation Sans',sans-serif;-webkit-text-stroke:0.18px currentColor;transform:scaleX(1.0982);">Home</div>
<div class="a" style="left:1695px;top:395px;width:1px;height:20px;background:#d3d8db;"></div>
<svg class="a" style="left:1701px;top:408px;" width="10" height="3" viewBox="0 0 10 3"><rect x="0.8" y="0.8" width="1.6" height="1.6" fill="#333"/><rect x="4.2" y="0.8" width="1.6" height="1.6" fill="#333"/><rect x="7.6" y="0.8" width="1.6" height="1.6" fill="#333"/></svg>
<div class="a" style="left:944px;top:416px;width:771px;height:18px;background:#f3f6f7;"></div>
<div class="a" style="left:944px;top:434px;width:771px;height:1px;background:#d3d8db;"></div>
<div class="a" style="left:973px;top:416px;width:1px;height:18px;background:#d3d8db;"></div>
<div class="a" style="left:999px;top:416px;width:1px;height:18px;background:#d3d8db;"></div>
<div class="a" style="left:1474px;top:416px;width:1px;height:18px;background:#d3d8db;"></div>
<div class="a" style="left:1554px;top:416px;width:1px;height:18px;background:#d3d8db;"></div>
<div class="a" style="left:1714px;top:416px;width:1px;height:18px;background:#c8cdd1;"></div>
<svg class="a" style="left:1004px;top:421px;" width="12" height="8" viewBox="0 0 12 8"><path d="M0.5 7.5L6 0.5l5.5 7z" fill="#7a8088"/></svg>
<div class="t" id="t58" style="left:1019.10px;top:420px;font-size:11px;color:#444;font-family:'Liberation Sans',sans-serif;-webkit-text-stroke:0.18px currentColor;transform:scaleX(1.1076);">Name</div>
<div class="t" id="t59" style="left:1476.70px;top:420px;font-size:11px;color:#444;font-family:'Liberation Sans',sans-serif;-webkit-text-stroke:0.18px currentColor;transform:scaleX(1.0791);">Size</div>
<div class="t" id="t60" style="left:1557.10px;top:420px;font-size:11px;color:#444;font-family:'Liberation Sans',sans-serif;-webkit-text-stroke:0.18px currentColor;transform:scaleX(1.1232);">Modified</div>
<div class="a" style="left:955px;top:440px;width:13px;height:13px;background:#ffffff;border:1px solid #a6a6a6;border-radius:2px;"></div>
<svg class="a" style="left:980px;top:438px;" width="17" height="15" viewBox="0 0 17 15"><path d="M0.5 3V1.8C.5 1.2.9 1 1.5 1h4l1.5 1.5h7.5c.6 0 1 .4 1 1v9.5H.5z" fill="#e6c252"/><path d="M2 3.5h12v2H2z" fill="#fff"/><path d="M0.5 5h15.5v8.5H.5z" fill="#f4d874" stroke="#dbb445" stroke-width="0.6"/></svg>
<div class="t" id="t61" style="left:1002.60px;top:441px;font-size:12px;color:#2020b0;font-family:'Liberation Sans',sans-serif;-webkit-text-stroke:0.18px currentColor;transform:scaleX(1.1379);">shinyapps</div>
<div class="a" style="left:955px;top:463px;width:13px;height:13px;background:#ffffff;border:1px solid #a6a6a6;border-radius:2px;"></div>
<svg class="a" style="left:980px;top:461px;" width="17" height="15" viewBox="0 0 17 15"><path d="M0.5 3V1.8C.5 1.2.9 1 1.5 1h4l1.5 1.5h7.5c.6 0 1 .4 1 1v9.5H.5z" fill="#e6c252"/><path d="M2 3.5h12v2H2z" fill="#fff"/><path d="M0.5 5h15.5v8.5H.5z" fill="#f4d874" stroke="#dbb445" stroke-width="0.6"/></svg>
<div class="t" id="t62" style="left:1002.60px;top:464px;font-size:12px;color:#2020b0;font-family:'Liberation Sans',sans-serif;-webkit-text-stroke:0.18px currentColor;transform:scaleX(1.1453);">shinylogs</div>
<svg class="a" style="left:0px;top:0px;" width="84" height="20" viewBox="0 0 84 20"><ellipse cx="15.4" cy="10" rx="14.6" ry="8.8" fill="#ec1c24" transform="rotate(-4 15.4 10)"/><text x="4.8" y="13.6" font-family="Liberation Sans" font-style="italic" font-size="12.5" fill="#fff" letter-spacing="-0.3">php</text><g fill="none" stroke="#111" stroke-width="1.7" stroke-linecap="round" stroke-linejoin="round"><path d="M34.5 6.5h11.5l-1 7.5H33.5z"/><path d="M41 2.8L39 16.3"/><path d="M57 2.8l.5 1.8M49.5 5.8h14.5M53 6.5c1.5 4.5 5 7.5 11 8.5M61.5 6.5C59 11 55 14 48.5 15"/><path d="M68.5 3.8L66.5 16M68.5 3.8h12l-1.5 11c-.2 1-.8 1.3-2 .8M70.5 7l3.5 5.5M74 7l-3.5 6M75.5 7l3 5M78.5 7l-3.5 6"/></g></svg>
<div class="a" style="left:1378px;top:788px;width:144px;height:30px;background:#fff;box-shadow:0 -2px 10px 2px rgba(0,0,0,0.16);"></div>
</body></html>
